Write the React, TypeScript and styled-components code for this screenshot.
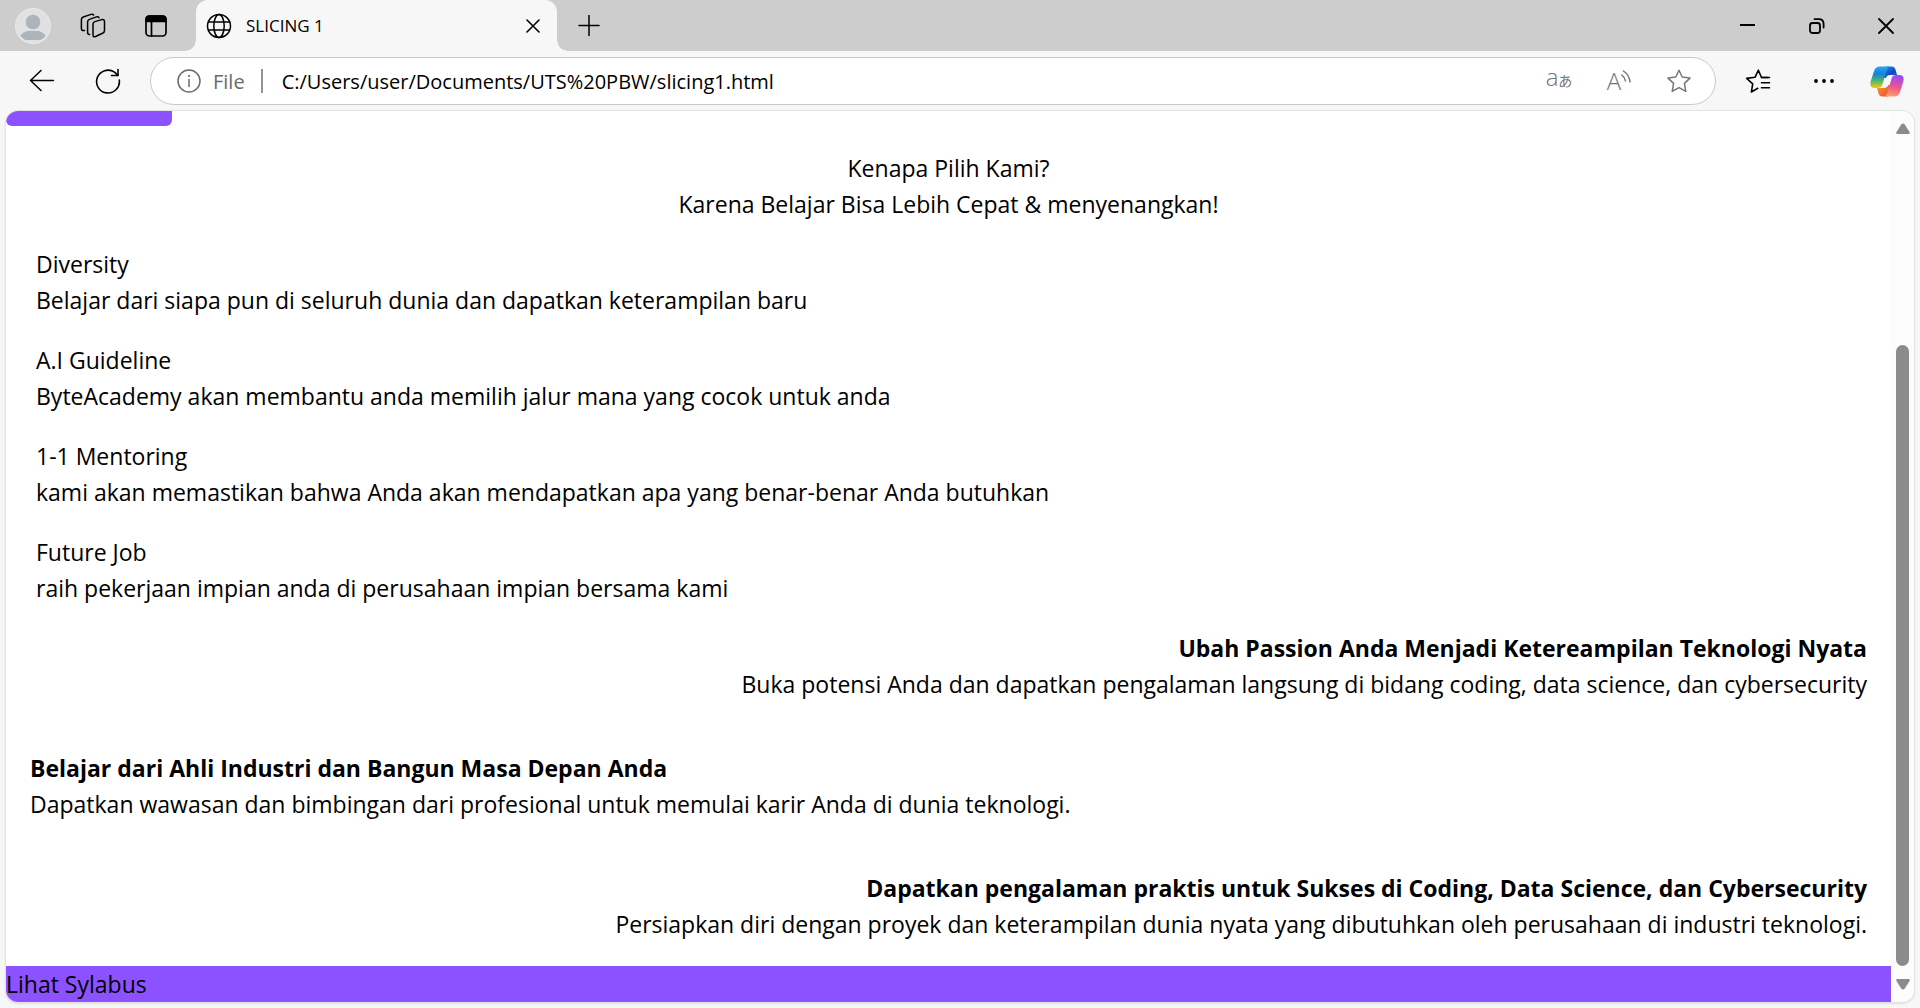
import React from "react";
import styled, { createGlobalStyle, css } from "styled-components";

const GlobalStyle = createGlobalStyle`
  *, *::before, *::after { box-sizing: border-box; }
  body {
    margin: 0;
    background: #f7f7f7;
    color: #000;
    font-family: "Open Sans", "Noto Sans", "Noto Sans CJK JP", sans-serif;
  }
`;

const Window = styled.div`
  display: flex;
  flex-direction: column;
  min-height: 100vh;
`;

const TitleBar = styled.header`
  display: flex;
  align-items: stretch;
  height: 51px;
  background: #cdcdcd;
`;

const IconButton = styled.button<{ $width: number; $tone?: string }>`
  display: flex;
  align-items: center;
  justify-content: center;
  flex: none;
  width: ${(p) => p.$width}px;
  padding: 0;
  border: 0;
  background: transparent;
  color: ${(p) => p.$tone ?? "#000"};
  font: inherit;
  svg { display: block; }
`;

const flare = css`
  content: "";
  position: absolute;
  bottom: 0;
  width: 10px;
  height: 10px;
`;

const Tab = styled.div`
  position: relative;
  display: flex;
  align-items: center;
  flex: 0 1 361px;
  margin-left: 4px;
  padding-left: 10px;
  border-radius: 12px 12px 0 0;
  background: #f7f7f7;
  &::before {
    ${flare}
    right: 100%;
    background: radial-gradient(circle at 0 0, transparent 9px, #f7f7f7 10px);
  }
  &::after {
    ${flare}
    left: 100%;
    background: radial-gradient(circle at 100% 0, transparent 9px, #f7f7f7 10px);
  }
`;

const TabTitle = styled.span`
  flex: 1;
  padding-left: 14px;
  font-size: 17px;
  line-height: 24px;
`;

const WindowControls = styled.div`
  display: flex;
  margin-left: auto;
`;

const Toolbar = styled.nav`
  display: flex;
  align-items: stretch;
  padding: 6px 3px 5px 9px;
  background: #f7f7f7;
`;

const AddressBar = styled.form`
  display: flex;
  align-items: stretch;
  flex: 1;
  height: 48px;
  margin: 0 9px;
  padding: 0 6px 0 14px;
  border: 1px solid #c9c9c9;
  border-radius: 24px;
  background: #fff;
`;

const SiteInfo = styled.button`
  display: flex;
  align-items: center;
  gap: 12px;
  padding: 0 16px 0 12px;
  border: 0;
  background: transparent;
  color: #6b6b6b;
  font: inherit;
  font-size: 20px;
`;

const Divider = styled.span`
  align-self: center;
  width: 2px;
  height: 24px;
  background: #949494;
`;

const AddressInput = styled.input`
  flex: 1;
  min-width: 0;
  padding: 0 0 0 19px;
  border: 0;
  outline: 0;
  background: transparent;
  color: #000;
  font: inherit;
  font-size: 20px;
`;

const Translate = styled.span`
  display: flex;
  align-items: baseline;
  font-size: 24px;
  line-height: 28px;
  padding-bottom: 4px;
  font-weight: 300;
  small {
    font-size: 14px;
    font-weight: 400;
  }
`;

const ReadAloud = styled.span`
  display: flex;
  align-items: center;
  font-size: 24px;
  line-height: 24px;
  font-weight: 300;
`;

const Viewport = styled.div`
  display: flex;
  flex: 1;
  margin: 0 5px 5px;
  border: 1px solid #e4e4e4;
  border-radius: 13px;
  background: #fff;
  overflow: hidden;
  box-shadow: 0 1px 2px rgba(0, 0, 0, 0.1);
`;

const Page = styled.main`
  flex: 1;
  min-width: 0;
  font-size: 23px;
  line-height: 36px;
  p, h2, h3 { margin: 0; font-size: inherit; font-weight: inherit; }
`;

const ButtonStub = styled.div`
  width: 166px;
  height: 15px;
  border-radius: 0 0 6px 6px;
  background: #8c52ff;
`;

const Intro = styled.section`
  padding: 24px;
  text-align: center;
`;

const Features = styled.section`
  display: flex;
  flex-direction: column;
  gap: 24px;
  padding: 0 30px;
`;

const Highlight = styled.section<{ $align: "left" | "right" }>`
  padding: 24px;
  text-align: ${(p) => p.$align};
  && h2 { font-weight: 700; }
`;

const Syllabus = styled.div`
  background: #8c52ff;
`;

const ScrollRail = styled.div`
  display: flex;
  flex-direction: column;
  align-items: center;
  flex: none;
  width: 23px;
  padding: 12px 0;
  background: #fcfcfc;
  svg { display: block; flex: none; }
`;

const ScrollTrack = styled.div`
  display: flex;
  flex-direction: column;
  flex: 1;
  width: 13px;
  margin: 3px 0 13px;
`;

const ScrollSpace = styled.div`
  flex: 208;
`;

const ScrollThumb = styled.div`
  flex: 622;
  border-radius: 7px;
  background: #8b8b8b;
`;

type LineProps = { size?: number; width?: number; children: React.ReactNode };

const Line = ({ size = 24, width = 1.5, children }: LineProps) => (
  <svg
    width={size}
    height={size}
    viewBox={`0 0 ${size} ${size}`}
    fill="none"
    stroke="currentColor"
    strokeWidth={width}
    strokeLinecap="round"
    strokeLinejoin="round"
    aria-hidden="true"
  >
    {children}
  </svg>
);

const Avatar = () => (
  <svg width="36" height="36" viewBox="0 0 36 36" aria-hidden="true">
    <defs>
      <clipPath id="avatar-disc"><circle cx="18" cy="18" r="16" /></clipPath>
    </defs>
    <circle cx="18" cy="18" r="18" fill="#e6e8ea" />
    <circle cx="18" cy="18" r="17" fill="#dfe1e3" />
    <g clipPath="url(#avatar-disc)" fill="#adb5ba">
      <circle cx="18" cy="14" r="7.3" />
      <path d="M4 32c1-6.500 6-9 10-9h8c4 0 9 2.500 10 9z" />
    </g>
  </svg>
);

const Workspaces = () => (
  <Line size={26}>
    <path d="M14.800 8.600 21.800 6.600Q24.500 6 24.500 8.600V17.500Q24.500 19.500 22.500 20.300L15.500 23.500Q13 24.500 13 22V11Q13 9.200 14.800 8.600Z" />
    <path d="M9.600 21.500Q7.600 21.500 7.600 19.500V9Q7.600 7 9.400 6.400L16.500 3.900Q18.200 3.300 19 4.600" />
    <path d="M4.500 17.500Q1.400 18 1.400 15.500V6.500Q1.400 4.600 3.200 4L11 1.400Q12.800.9 13.600 2" />
  </Line>
);

const TabActions = () => (
  <Line size={24} width={1.7}>
    <rect x="2" y="2" width="20" height="20" rx="3.500" />
    <path d="M2 7.500V5.500Q2 2 5.500 2h13Q22 2 22 5.500v2z" fill="currentColor" />
    <path d="M7.500 8v14" />
  </Line>
);

const Globe = () => (
  <Line size={26}>
    <circle cx="13" cy="13" r="11.500" />
    <ellipse cx="13" cy="13" rx="5.200" ry="11.500" />
    <path d="M2.500 9h21M2.500 17h21" />
  </Line>
);

const Cross = ({ size, width }: { size: number; width: number }) => (
  <Line size={size} width={width}>
    <path d={`M1 1 ${size - 1} ${size - 1}M${size - 1} 1 1 ${size - 1}`} />
  </Line>
);

const Plus = () => (
  <Line size={22}>
    <path d="M11 .5v20M1 10.500h20" />
  </Line>
);

const Minimize = () => (
  <Line size={16} width={2}>
    <path d="M0 7h15" strokeLinecap="butt" />
  </Line>
);

const Restore = () => (
  <Line size={16} width={1.8}>
    <rect x="1" y="5" width="10" height="10" rx="2.500" />
    <path d="M5.500 1.200H10Q14.600 1.200 14.600 6v3.500" />
  </Line>
);

const Back = () => (
  <Line size={26}>
    <path d="M24.500 12.500H1.500M12 2.500 1.500 12.500 12 22.500" />
  </Line>
);

const Refresh = () => (
  <Line size={26} width={1.6}>
    <path d="M24.300 12A11.400 11.400 0 1 1 19.500 4.200L23 7.300" />
    <path d="M23 1.500v6h-6.500" />
  </Line>
);

const Info = () => (
  <Line size={24} width={1.5}>
    <circle cx="12" cy="12" r="11" />
    <path d="M12 10.500v7" />
    <circle cx="12" cy="7" r=".6" fill="currentColor" strokeWidth="1" />
  </Line>
);

const Waves = () => (
  <svg width="10" height="22" viewBox="0 0 10 22" fill="none" stroke="currentColor" strokeWidth="1.500" strokeLinecap="round" aria-hidden="true">
    <path d="M.8 5Q4 7.500 4.500 11M2.500 1Q8.300 5 9 12" />
  </svg>
);

const Star = () => (
  <Line size={26} width={1.5}>
    <path d="M13 2.200 16.200 9 24 10.100 18.400 15.400 19.800 23.400 13 19.600 6.200 23.400 7.600 15.400 2 10.100 9.800 9Z" />
  </Line>
);

const Favorites = () => (
  <Line size={26} width={1.6}>
    <path d="M23 9.500H16.500L13.400 2.200 10 9.300 1.700 10.400 7.700 15.800 6.400 24 12.800 20.300" />
    <path d="M16.500 9.500H24.500M16.500 14.700H24.500M16.500 19.800H24.500" />
  </Line>
);

const Dots = () => (
  <svg width="20" height="4" viewBox="0 0 20 4" fill="currentColor" aria-hidden="true">
    <circle cx="2" cy="2" r="1.900" />
    <circle cx="10" cy="2" r="1.900" />
    <circle cx="18" cy="2" r="1.900" />
  </svg>
);

const Copilot = () => (
  <svg width="34" height="31" viewBox="0 0 34 31" aria-hidden="true">
    <defs>
      <linearGradient id="cp-left" x1="0" y1="0" x2="0" y2="1">
        <stop offset="0" stopColor="#20a7f0" />
        <stop offset=".35" stopColor="#1683dc" />
        <stop offset=".65" stopColor="#4cb56e" />
        <stop offset="1" stopColor="#f5cc0c" />
      </linearGradient>
      <linearGradient id="cp-right" x1=".4" y1="0" x2=".2" y2="1">
        <stop offset="0" stopColor="#9a4df0" />
        <stop offset=".5" stopColor="#ee5296" />
        <stop offset="1" stopColor="#ffa75c" />
      </linearGradient>
      <linearGradient id="cp-top" x1="0" y1="0" x2="1" y2="1">
        <stop offset="0" stopColor="#1b9bea" />
        <stop offset=".6" stopColor="#1746c4" />
        <stop offset="1" stopColor="#2760e0" />
      </linearGradient>
      <linearGradient id="cp-bottom" x1="0" y1="0" x2="1" y2="1">
        <stop offset="0" stopColor="#f8a32a" />
        <stop offset="1" stopColor="#e8413c" />
      </linearGradient>
    </defs>
    <path d="M16 .5h5.500C24 .5 25 2 25.600 4l1.500 5H20c-2 0-3.500 1-4.200 3H13z" fill="url(#cp-top)" />
    <path d="M18 30.500h-5.500C10 30.500 9 29 8.400 27L7 22h7c2 0 3.500-1 4.200-3H21z" fill="url(#cp-bottom)" />
    <path d="M10 .5h10.500c-2 0-3 1.500-3.700 3.800l-4.500 14.500c-.7 2.200-2 3.200-4.300 3.200H4.500C1 22-.5 19.500.8 15L4 5C5 2 7 .5 10 .5z" fill="url(#cp-left)" />
    <path d="M24 30.500H13.500c2 0 3-1.500 3.700-3.800l4.500-14.500C22.400 10 23.700 9 26 9h3.500c3.500 0 5 2.500 3.700 7L30 26c-1 3-3 4.500-6 4.500z" fill="url(#cp-right)" />
  </svg>
);

const Arrow = ({ down = false }: { down?: boolean }) => (
  <svg width="14" height="11" viewBox="0 0 14 11" fill="#8b8b8b" aria-hidden="true">
    <path
      d={
        down
          ? "M1.500 0h11q2 0 1 2L8.800 9.500q-1.800 2-3.600 0L.5 2Q-.5 0 1.500 0z"
          : "M1.500 11h11q2 0 1-2L8.800 1.500q-1.800-2-3.600 0L.5 9q-1 2 1 2z"
      }
    />
  </svg>
);

const features = [
  ["Diversity", "Belajar dari siapa pun di seluruh dunia dan dapatkan keterampilan baru"],
  ["A.I Guideline", "ByteAcademy akan membantu anda memilih jalur mana yang cocok untuk anda"],
  ["1-1 Mentoring", "kami akan memastikan bahwa Anda akan mendapatkan apa yang benar-benar Anda butuhkan"],
  ["Future Job", "raih pekerjaan impian anda di perusahaan impian bersama kami"],
];

const highlights: { align: "left" | "right"; title: string; text: string }[] = [
  {
    align: "right",
    title: "Ubah Passion Anda Menjadi Ketereampilan Teknologi Nyata",
    text: "Buka potensi Anda dan dapatkan pengalaman langsung di bidang coding, data science, dan cybersecurity",
  },
  {
    align: "left",
    title: "Belajar dari Ahli Industri dan Bangun Masa Depan Anda",
    text: "Dapatkan wawasan dan bimbingan dari profesional untuk memulai karir Anda di dunia teknologi.",
  },
  {
    align: "right",
    title: "Dapatkan pengalaman praktis untuk Sukses di Coding, Data Science, dan Cybersecurity",
    text: "Persiapkan diri dengan proyek dan keterampilan dunia nyata yang dibutuhkan oleh perusahaan di industri teknologi.",
  },
];

export default function App() {
  return (
    <Window>
      <GlobalStyle />
      <TitleBar>
        <IconButton $width={66} aria-label="Profile"><Avatar /></IconButton>
        <IconButton $width={54} aria-label="Workspaces"><Workspaces /></IconButton>
        <IconButton $width={72} aria-label="Tab actions"><TabActions /></IconButton>
        <Tab>
          <Globe />
          <TabTitle>SLICING 1</TabTitle>
          <IconButton $width={48} aria-label="Close tab"><Cross size={14} width={1.6} /></IconButton>
        </Tab>
        <IconButton $width={64} aria-label="New tab"><Plus /></IconButton>
        <WindowControls>
          <IconButton $width={69} aria-label="Minimize"><Minimize /></IconButton>
          <IconButton $width={69} aria-label="Restore"><Restore /></IconButton>
          <IconButton $width={69} aria-label="Close"><Cross size={16} width={1.8} /></IconButton>
        </WindowControls>
      </TitleBar>

      <Toolbar>
        <IconButton $width={66} aria-label="Back"><Back /></IconButton>
        <IconButton $width={66} aria-label="Refresh"><Refresh /></IconButton>
        <AddressBar onSubmit={(e) => e.preventDefault()}>
          <SiteInfo type="button"><Info />File</SiteInfo>
          <Divider />
          <AddressInput
            aria-label="Address"
            spellCheck={false}
            defaultValue="C:/Users/user/Documents/UTS%20PBW/slicing1.html"
          />
          <IconButton type="button" $width={60} $tone="#767676" aria-label="Translate">
            <Translate>a<small>あ</small></Translate>
          </IconButton>
          <IconButton type="button" $width={60} $tone="#767676" aria-label="Read aloud">
            <ReadAloud>A<Waves /></ReadAloud>
          </IconButton>
          <IconButton type="button" $width={60} $tone="#767676" aria-label="Add to favorites"><Star /></IconButton>
        </AddressBar>
        <IconButton $width={66} aria-label="Favorites"><Favorites /></IconButton>
        <IconButton $width={66} aria-label="Settings and more"><Dots /></IconButton>
        <IconButton $width={60} aria-label="Copilot"><Copilot /></IconButton>
      </Toolbar>

      <Viewport>
        <Page>
          <ButtonStub />
          <Intro>
            <h2>Kenapa Pilih Kami?</h2>
            <p>Karena Belajar Bisa Lebih Cepat &amp; menyenangkan!</p>
          </Intro>
          <Features>
            {features.map(([title, text]) => (
              <article key={title}>
                <h3>{title}</h3>
                <p>{text}</p>
              </article>
            ))}
          </Features>
          {highlights.map((h) => (
            <Highlight key={h.title} $align={h.align}>
              <h2>{h.title}</h2>
              <p>{h.text}</p>
            </Highlight>
          ))}
          <Syllabus>Lihat Sylabus</Syllabus>
        </Page>
        <ScrollRail aria-hidden="true">
          <Arrow />
          <ScrollTrack>
            <ScrollSpace />
            <ScrollThumb />
          </ScrollTrack>
          <Arrow down />
        </ScrollRail>
      </Viewport>
    </Window>
  );
}
